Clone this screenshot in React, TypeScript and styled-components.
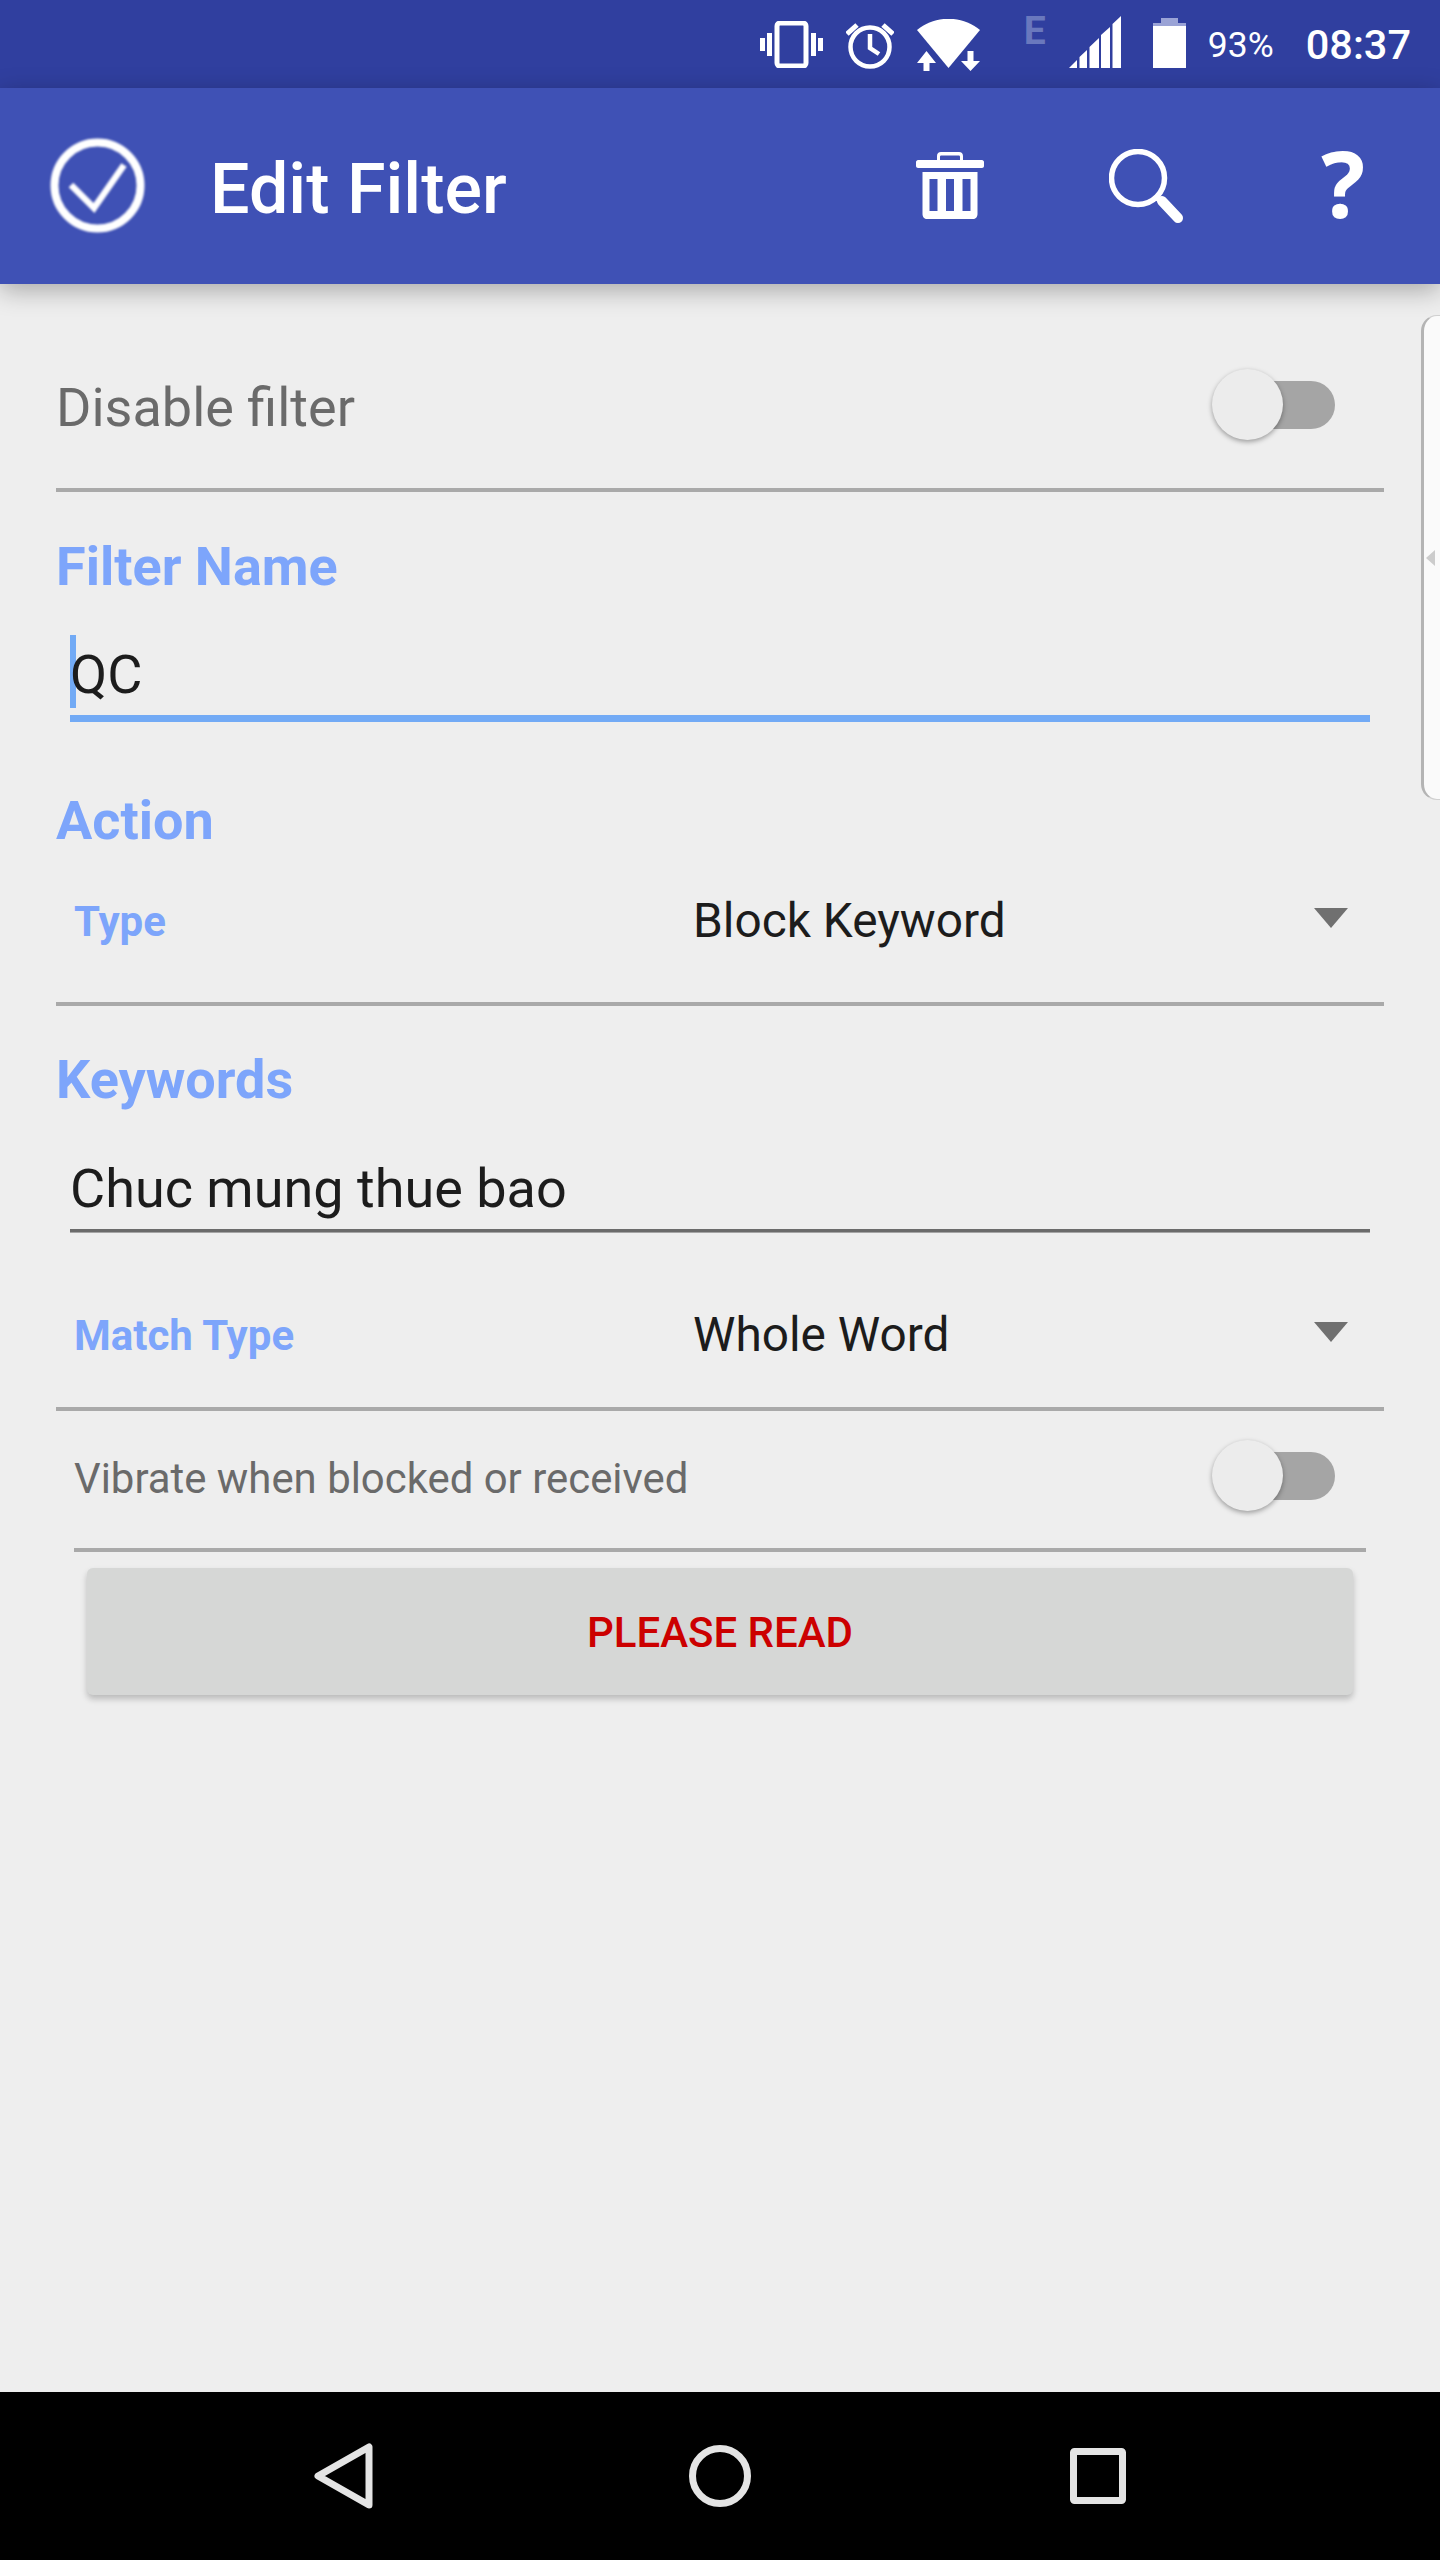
import React from "react";
import styled, { createGlobalStyle } from "styled-components";

const Global = createGlobalStyle`
  html, body { margin: 0; padding: 0; background: #eeeeee; }
  * { box-sizing: border-box; }
`;

const Page = styled.div`
  position: relative;
  width: 1440px;
  height: 2560px;
  display: flex;
  flex-direction: column;
  overflow: hidden;
  background: #eeeeee;
  font-family: Roboto, "Liberation Sans", sans-serif;
`;

const StatusBar = styled.div`
  flex: none;
  height: 88px;
  background: #303f9f;
  display: flex;
  align-items: flex-start;
  justify-content: flex-end;
  padding-right: 29px;
  color: #fff;
`;

const StatusIcon = styled.svg<{ $gap: number; $top: number }>`
  flex: none;
  display: block;
  margin-left: ${(p) => p.$gap}px;
  margin-top: ${(p) => p.$top}px;
`;

const NetworkLetter = styled.span`
  flex: none;
  margin: 8px 0 0 44px;
  width: 19px;
  font-size: 39px;
  line-height: 46px;
  font-weight: 700;
  color: #6a78bd;
`;

const BatteryText = styled.span`
  flex: none;
  margin: 23px 0 0 22px;
  font-size: 35.500px;
  line-height: 44px;
  font-weight: 400;
`;

const Clock = styled.span`
  flex: none;
  margin: 23px 0 0 32px;
  font-size: 41.500px;
  line-height: 44px;
  font-weight: 500;
`;

const AppBar = styled.header`
  position: relative;
  z-index: 2;
  flex: none;
  height: 196px;
  background: #3f51b5;
  display: flex;
  align-items: center;
  color: #fff;
  box-shadow: 0 6px 24px rgba(0, 0, 0, 0.3);
`;

const BarIcon = styled.svg<{ $left: number; $soft?: boolean }>`
  flex: none;
  display: block;
  margin-left: ${(p) => p.$left}px;
  filter: ${(p) => (p.$soft ? "blur(0.8px)" : "none")};
`;

const Title = styled.h1`
  flex: none;
  width: 706px;
  margin: 6px 0 0 64px;
  font-size: 70px;
  line-height: 80px;
  font-weight: 500;
`;

const HelpGlyph = styled.span`
  flex: none;
  margin: 0 0 6px 137px;
  font-family: "Noto Sans", sans-serif;
  font-size: 92px;
  line-height: 100px;
  font-weight: 700;
`;

const Body = styled.main`
  position: relative;
  flex: 1;
  padding: 36px 56px 0 56px;
  display: flex;
  flex-direction: column;
`;

const SideHandle = styled.div`
  position: absolute;
  top: 31px;
  right: -14px;
  width: 33px;
  height: 485px;
  background: #fafafa;
  border-left: 3px solid #b4b4b4;
  border-top: 1px solid #d0d0d0;
  border-bottom: 1px solid #d0d0d0;
  border-radius: 16px;
  display: flex;
  align-items: center;
  padding-left: 2px;
  &::before {
    content: "";
    border-style: solid;
    border-width: 8px 9px 8px 0;
    border-color: transparent #cccccc transparent transparent;
  }
`;

const SwitchRow = styled.div<{ $inset: number; $height: number; $size: number }>`
  flex: none;
  height: ${(p) => p.$height}px;
  display: flex;
  align-items: center;
  justify-content: space-between;
  padding-left: ${(p) => p.$inset}px;
  padding-right: 49px;
  font-size: ${(p) => p.$size}px;
  color: #6a6a6a;
`;

const SwitchLabel = styled.span<{ $shift: number }>`
  margin-top: ${(p) => p.$shift}px;
`;

const Track = styled.span<{ $shift: number }>`
  position: relative;
  display: block;
  width: 114px;
  height: 48px;
  margin-top: ${(p) => p.$shift}px;
  border-radius: 24px;
  background: #a5a5a5;
`;

const Thumb = styled.span`
  position: absolute;
  left: -9px;
  top: -12px;
  width: 71px;
  height: 71px;
  border-radius: 50%;
  background: #ececec;
  box-shadow: 0 2px 5px rgba(0, 0, 0, 0.35);
`;

const Rule = styled.div<{ $inset?: number }>`
  flex: none;
  height: 4px;
  margin: 0 ${(p) => p.$inset ?? 0}px;
  background: #a9a9a9;
`;

const SectionTitle = styled.h2<{ $top: number }>`
  flex: none;
  margin: ${(p) => p.$top}px 0 0;
  font-size: 54px;
  line-height: 64px;
  font-weight: 700;
  color: #7da5fb;
`;

const Field = styled.div<{ $top: number; $focused?: boolean }>`
  position: relative;
  flex: none;
  margin: ${(p) => p.$top}px 14px 0 14px;
  padding-bottom: 8px;
  font-size: 54px;
  line-height: 64px;
  color: #1c1c1c;
  border-bottom: ${(p) => (p.$focused ? "7px solid #72aaf5" : "3px solid #6b6b6b")};
  box-shadow: ${(p) => (p.$focused ? "none" : "0 1px 0 #a5a5a5")};
`;

const FieldText = styled.span`
  position: relative;
`;

const Caret = styled.span`
  position: absolute;
  left: 0;
  top: -8px;
  width: 6px;
  height: 73px;
  background: #72aaf5;
`;

const SelectRow = styled.div<{ $top: number; $bottom: number; $height: number }>`
  flex: none;
  margin: ${(p) => p.$top}px 0 ${(p) => p.$bottom}px;
  height: ${(p) => p.$height}px;
  display: grid;
  grid-template-columns: 619px 1fr auto;
  align-items: center;
  padding: 0 36px 0 18px;
`;

const SelectLabel = styled.span`
  font-size: 42px;
  font-weight: 700;
  color: #7da5fb;
`;

const SelectValue = styled.span`
  font-size: 47.800px;
  color: #1c1c1c;
`;

const Arrow = styled.span`
  margin-bottom: 6px;
  width: 0;
  height: 0;
  border-style: solid;
  border-width: 20px 17px 0;
  border-color: #707070 transparent transparent;
`;

const ReadButton = styled.button`
  flex: none;
  height: 127px;
  margin: 16px 31px 0;
  padding: 2px 0 0;
  border: 0;
  border-radius: 6px;
  background: #d6d7d6;
  color: #cc0000;
  font-family: inherit;
  font-size: 42px;
  font-weight: 500;
  box-shadow: 0 4px 6px rgba(0, 0, 0, 0.22);
`;

const NavBar = styled.nav`
  flex: none;
  height: 168px;
  background: #000;
  display: flex;
  align-items: center;
  padding-left: 314px;
`;

const NavIcon = styled.svg<{ $left: number }>`
  flex: none;
  display: block;
  margin-left: ${(p) => p.$left}px;
`;

function Switch({ shift }: { shift: number }) {
  return (
    <Track $shift={shift}>
      <Thumb />
    </Track>
  );
}

export default function App() {
  return (
    <Page>
      <Global />
      <StatusBar>
        <StatusIcon $gap={0} $top={21} width="63" height="47" viewBox="0 0 63 47" fill="none" stroke="#fff">
          <rect x="17" y="2" width="29" height="43" rx="3" strokeWidth="5" />
          <path d="M9.500 12v23M2.500 17v13M53.500 12v23M60.500 17v13" strokeWidth="5" />
        </StatusIcon>
        <StatusIcon $gap={23} $top={20} width="48" height="49" viewBox="0 0 48 49" fill="none" stroke="#fff" strokeWidth="4.500">
          <circle cx="24" cy="27" r="19.500" />
          <path d="M24 14v14l9 6" />
          <path d="M1 14 11 5M47 14 37 5" strokeWidth="5" />
        </StatusIcon>
        <StatusIcon $gap={23} $top={19} width="63" height="52" viewBox="0 0 63 52" fill="#fff">
          <path d="M0 11C18-4 45-4 63 11L31.500 49Z" />
          <path d="M9.500 32 19 44H12.500V52H6.500V44H0Z" />
          <path d="M50.500 32H56.500V42H63L53.500 52 44 42H50.500Z" />
        </StatusIcon>
        <NetworkLetter>E</NetworkLetter>
        <StatusIcon $gap={26} $top={16} width="52" height="52" viewBox="0 0 52 52" fill="#fff">
          <path d="M0 52 8 44V52ZM10.500 41 18 34V52H10.500ZM20.500 31 30 22V52H20.500ZM32 19 41 11V52H32ZM43.500 8 52 0V52H43.500Z" />
        </StatusIcon>
        <StatusIcon $gap={32} $top={18} width="33" height="50" viewBox="0 0 33 50" fill="#fff">
          <path d="M8 0H25V5H33V8H0V5H8Z" fill="#9aa3d6" />
          <path d="M0 8H33V50H0Z" />
        </StatusIcon>
        <BatteryText>93%</BatteryText>
        <Clock>08:37</Clock>
      </StatusBar>

      <AppBar>
        <BarIcon $left={50} $soft width="96" height="96" viewBox="0 0 96 96" fill="none" stroke="#fff">
          <circle cx="47.500" cy="47.500" r="43" strokeWidth="8" />
          <path d="M21 47 44 70 74 27" strokeWidth="6.500" />
        </BarIcon>
        <Title>Edit Filter</Title>
        <BarIcon $left={0} width="68" height="68" viewBox="0 0 68 68" fill="#fff">
          <path fillRule="evenodd" d="M2 8H21V4C21 1.500 22.500 0 25 0H43C45.500 0 47 1.500 47 4V8H66C67 8 68 9 68 10V14C68 15 67 16 66 16H2C1 16 0 15 0 14V10C0 9 1 8 2 8ZM24 8H44V5C44 4 43.500 3.500 43 3.500H25C24.500 3.500 24 4 24 5Z" />
          <path fillRule="evenodd" d="M6.500 20H61.500V62C61.500 65 59.500 67 57 67H11C8.500 67 6.500 65 6.500 62ZM13.500 27V59H21.500V27ZM30 27V59H38V27ZM46.500 27V59H54.500V27Z" />
        </BarIcon>
        <BarIcon $left={125} width="75" height="75" viewBox="0 0 75 75" fill="none" stroke="#fff">
          <circle cx="29" cy="29" r="26.500" strokeWidth="5.500" />
          <path d="M53 52 69 69" strokeWidth="10" strokeLinecap="round" />
          <path d="M47 49 53 52" strokeWidth="5" />
        </BarIcon>
        <HelpGlyph>?</HelpGlyph>
      </AppBar>

      <Body>
        <SideHandle />
        <SwitchRow $inset={0} $height={168} $size={54}>
          <SwitchLabel $shift={6}>Disable filter</SwitchLabel>
          <Switch shift={2} />
        </SwitchRow>
        <Rule />
        <SectionTitle $top={43}>Filter Name</SectionTitle>
        <Field $top={44} $focused>
          <Caret />
          <FieldText>QC</FieldText>
        </Field>
        <SectionTitle $top={67}>Action</SectionTitle>
        <SelectRow $top={0} $bottom={13} $height={136}>
          <SelectLabel>Type</SelectLabel>
          <SelectValue>Block Keyword</SelectValue>
          <Arrow />
        </SelectRow>
        <Rule />
        <SectionTitle $top={42}>Keywords</SectionTitle>
        <Field $top={45}>
          <FieldText>Chuc mung thue bao</FieldText>
        </Field>
        <SelectRow $top={53} $bottom={22} $height={100}>
          <SelectLabel>Match Type</SelectLabel>
          <SelectValue>Whole Word</SelectValue>
          <Arrow />
        </SelectRow>
        <Rule />
        <SwitchRow $inset={18} $height={137} $size={41.9}>
          <SwitchLabel $shift={-3}>Vibrate when blocked or received</SwitchLabel>
          <Switch shift={-7} />
        </SwitchRow>
        <Rule $inset={18} />
        <ReadButton>PLEASE READ</ReadButton>
      </Body>

      <NavBar>
        <NavIcon $left={0} width="60" height="66" viewBox="0 0 60 66" fill="none" stroke="#e4e4e4" strokeWidth="7" strokeLinejoin="round">
          <path d="M55 4V62L4 33Z" />
        </NavIcon>
        <NavIcon $left={315} width="62" height="62" viewBox="0 0 62 62" fill="none" stroke="#e4e4e4" strokeWidth="7">
          <circle cx="31" cy="31" r="27.500" />
        </NavIcon>
        <NavIcon $left={319} width="56" height="56" viewBox="0 0 56 56" fill="none" stroke="#e4e4e4" strokeWidth="7" strokeLinejoin="round">
          <rect x="3.500" y="3.500" width="49" height="49" rx="1" />
        </NavIcon>
      </NavBar>
    </Page>
  );
}
